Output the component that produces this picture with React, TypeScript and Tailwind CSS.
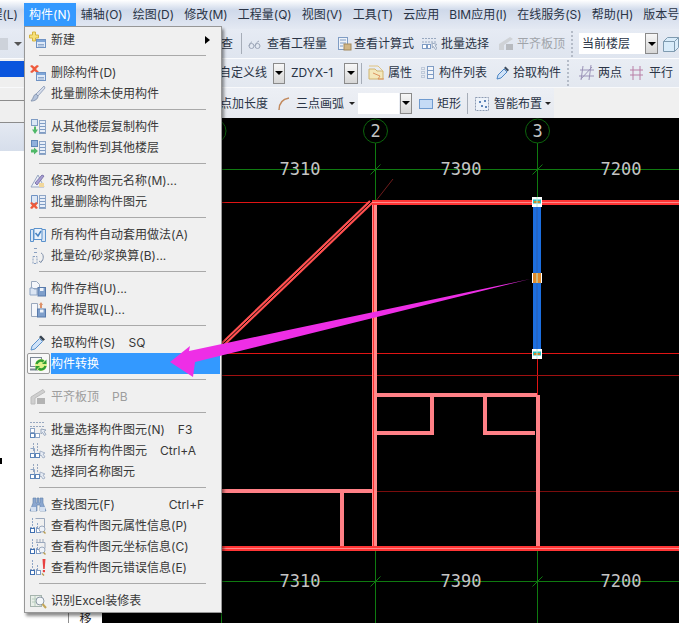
import React from "react";

const CJK = { fontFamily: 'Inter, "Noto Sans CJK SC", "Liberation Sans", sans-serif' };

function Svg({ w = 18, children }: { w?: number; children: React.ReactNode }) {
  return (
    <svg width={w} height={18} viewBox={`0 0 ${w} 18`} className="block shrink-0">
      {children}
    </svg>
  );
}

const MiniTable = ({ x = 7, y = 8 }: { x?: number; y?: number }) => (
  <g>
    <rect x={x + 0.5} y={y + 0.5} width="9" height="8" fill="#dfe9f7" stroke="#6f93c4" />
    <rect x={x + 1} y={y + 1} width="8" height="2" fill="#7fa6d8" />
    <path d={`M${x + 2} ${y + 5.5}h6M${x + 2} ${y + 7}h6`} stroke="#8fa9cc" />
  </g>
);
const Lists = ({ x = 9 }: { x?: number }) => (
  <g>
    <rect x={x + 0.5} y="2.500" width="6" height="13" fill="#e7eef8" stroke="#8fa6c6" />
    <path d={`M${x + 1} 5.500h5M${x + 1} 8.500h5M${x + 1} 11.500h5M${x + 1} 14.500h5`} stroke="#7f9cc4" />
  </g>
);
const Dashed = () => (
  <g fill="none" stroke="#8fa6c6">
    <path d="M3.500 1v9M1 10.500h9M8.500 6v4" strokeDasharray="2 1" />
    <rect x="1.500" y="11.500" width="4" height="4" stroke="#3f6fb0" fill="#fff" />
    <rect x="7.500" y="11.500" width="4" height="4" stroke="#7f9cc4" fill="#fff" />
  </g>
);

const icons: Record<string, React.ReactNode> = {
  new: (
    <>
      <path d="M3.500 1h3v3h3v3h-3v3h-3V7h-3V4h3z" fill="#f6e07a" stroke="#d4b440" />
      <MiniTable />
    </>
  ),
  del: (
    <>
      <path d="M1 2l2-1 2.500 2L8 1l2 1-3 3 3 3-2 1-2.500-2L3 9 1 8l3-3z" fill="#ee5a3c" />
      <MiniTable />
    </>
  ),
  brush: (
    <>
      <path d="M15 1L7 9l2 2 7-8z" fill="#d5dcea" stroke="#9aa8c0" />
      <path d="M7 9c-3 1-2 4-5 7 4 0 7-2 7-5z" fill="#b5c4dc" stroke="#8b9ab3" />
    </>
  ),
  copyFrom: (
    <>
      <Lists x={10} />
      <rect x="2.500" y="1.500" width="6" height="6" fill="#dbe7f5" stroke="#7f9cc4" />
      <path d="M5 8.500v3H3l3 4.500 3-4.500H7v-3z" fill="#4fb868" />
    </>
  ),
  copyTo: (
    <>
      <Lists x={10} />
      <rect x="2.500" y="1.500" width="6" height="6" fill="#8fb0dc" stroke="#5f86b8" />
      <path d="M2 10.500h3v-2l4 3.500-4 3.500v-2H2z" fill="#4fb868" />
    </>
  ),
  rename: (
    <>
      <path d="M2 15L9 3l6 12z" fill="#eef2f8" stroke="#98a6c2" />
      <path d="M6 11l7-8 2 1-7 9z" fill="#a89fd4" stroke="#7f78ac" />
      <rect x="10" y="11" width="5" height="4" fill="#f1d79a" />
    </>
  ),
  batchDel: (
    <>
      <Lists x={10} />
      <path d="M2.500 2.500h6v8h-6z" fill="#dce7f5" stroke="#6f93c4" />
      <path d="M1 10l2-1 2 2 2-2 2 1-2 2.500 2 2.500-2 1-2-2-2 2-2-1 2-2.500z" fill="#ee5a3c" />
    </>
  ),
  auto: (
    <>
      <path d="M1.500 3.500h3v12h-3zM12.500 3.500h4v12h-4z" fill="#dbe7f6" stroke="#5b92cc" />
      <path d="M5 2.500h8v11H5z" fill="#eaf2fb" stroke="#5b92cc" />
      <path d="M6.500 7l2.500 3 3-5" fill="none" stroke="#4a84c2" strokeWidth="1.500" />
    </>
  ),
  ab: (
    <>
      <path d="M5 1.500h3M5 5.500h3" stroke="#8aa0c0" />
      <path d="M4 9.500h4v7H4z" fill="none" stroke="#8aa0c0" strokeDasharray="2 1" />
      <path d="M12 6c3 1 3 7 0 9M10 14l2 1.500 1-2" fill="none" stroke="#7f90aa" />
    </>
  ),
  save: (
    <>
      <path d="M2.500 1.500h5l3 3v4h-8z" fill="#f4f6fa" stroke="#9aa8bd" />
      <path d="M1 8h3l1 1h3v6H1z" fill="#dbe5f3" stroke="#8fa6c6" />
      <rect x="9" y="7.500" width="7.500" height="8.500" fill="#7f9fcb" stroke="#587aab" />
      <rect x="11" y="8" width="3.500" height="3" fill="#eef3fa" />
    </>
  ),
  extract: (
    <>
      <path d="M2.500 2.500h6v13h-6z" fill="#f4f6fa" stroke="#9aa8bd" />
      <path d="M12 1l2 3h-1v3h-2V4h-1z" fill="#dd9168" />
      <rect x="8.500" y="8" width="8" height="8" fill="#7f9fcb" stroke="#587aab" />
      <rect x="11" y="8.500" width="3.500" height="3" fill="#eef3fa" />
    </>
  ),
  dropper: (
    <>
      <path d="M12 1.500l4 4-2 1.500-4-4z" fill="#36424f" />
      <path d="M10.500 4.500L3 12l-1 4 4-1 7.500-7.500z" fill="#cfe2f8" stroke="#5b92cc" />
    </>
  ),
  convert: (
    <>
      <rect x="0.500" y="2.500" width="11" height="9" fill="#f7f8f9" stroke="#7d8896" />
      <path d="M0 14.500h8" stroke="#7d8896" strokeWidth="2" />
      <circle cx="11" cy="10" r="6" fill="#dff28a" />
      <path d="M6.500 9c.8-3 4.500-4.500 7-2.500" fill="none" stroke="#2f9e34" strokeWidth="2.400" />
      <path d="M15.500 11c-.8 3-4.500 4.500-7 2.500" fill="none" stroke="#2f9e34" strokeWidth="2.400" />
      <path d="M12 9h4.500V4.500zM10 11H5.500v4.500z" fill="#2f9e34" />
    </>
  ),
  flat: (
    <>
      <path d="M2 9L14 1.500 16 4 6 10v6H2z" fill="#cfcfcf" stroke="#bcbcbc" />
      <rect x="8" y="10" width="8" height="6" fill="#b3b3b3" />
    </>
  ),
  selBatch: (
    <>
      <path d="M1 1.500h14M1 5.500h14" stroke="#98a8c0" strokeDasharray="2 1" />
      <path d="M12 8l5 1-2 1.500 2 3-1.500 1-2-3-1.500 1.500z" fill="#e8edf5" stroke="#9aa8bd" />
      <rect x="1.500" y="7.500" width="4" height="4" fill="#fff" stroke="#8fa6c6" />
      <rect x="1.500" y="12.500" width="4" height="4" fill="#fff" stroke="#5f86b8" />
      <rect x="6.500" y="12.500" width="4" height="4" fill="#fff" stroke="#8fa6c6" />
    </>
  ),
  selAll: (
    <>
      <path d="M4.500 1v9M8.500 1v9" stroke="#98a8c0" strokeDasharray="2 1" />
      <path d="M11 9l5 2-2 1 2 3-2 1-2-3-1 1z" fill="#e8edf5" stroke="#a9b5c8" />
      <rect x="1.500" y="11.500" width="4" height="4" fill="#fff" stroke="#5f86b8" />
      <rect x="6.500" y="11.500" width="4" height="4" fill="#fff" stroke="#5f86b8" />
      <path d="M1.500 6.500h4v5" fill="none" stroke="#8fa6c6" />
    </>
  ),
  binoc: (
    <>
      <path d="M4 2h3v5h1V2h0h2v5h1V2h3v5l3 8h-6V9H8v6H1l3-8z" fill="#8aa6cf" stroke="#5f7faa" strokeWidth=".6" />
      <rect x="2" y="11" width="5" height="4" fill="#d3dff0" />
      <rect x="11" y="11" width="5" height="4" fill="#d3dff0" />
    </>
  ),
  infoP: (
    <>
      <Dashed />
      <path d="M6.500 1.500h9v9h-3" fill="none" stroke="#9aa8bd" />
      <circle cx="13" cy="12" r="3" fill="#eef2f8" stroke="#9aa8bd" />
      <path d="M14.500 14.500l2 2" stroke="#b89c50" strokeWidth="1.500" />
    </>
  ),
  infoC: (
    <>
      <Dashed />
      <path d="M8 1v3M11 1v3M14 1v3M7 4.500h9v6" fill="none" stroke="#9aa8bd" />
      <circle cx="13" cy="12" r="3" fill="#eef2f8" stroke="#9aa8bd" />
      <path d="M14.500 14.500l2 2" stroke="#b89c50" strokeWidth="1.500" />
    </>
  ),
  infoE: (
    <>
      <Dashed />
      <path d="M13.500 0h3l-.8 10h-1.500z" fill="#e84040" />
      <rect x="13.800" y="11" width="2.200" height="2.200" fill="#e84040" />
      <path d="M13 14.500l2 2" stroke="#b89c50" strokeWidth="1.500" />
    </>
  ),
  excel: (
    <>
      <rect x="1.500" y="3.500" width="11" height="11" fill="#e9efe9" stroke="#a6b4ae" />
      <path d="M3 7h8M3 10h8M6 4v10" stroke="#b7cdbd" />
      <circle cx="11" cy="9" r="4" fill="#f3f6f8" stroke="#8d99a6" />
      <path d="M13.500 12l3.500 4" stroke="#c4a758" strokeWidth="2" />
    </>
  ),
};

type Entry =
  | { sep: true }
  | { icon?: string; label: string; sc?: string; scCls?: string; arrow?: boolean; disabled?: boolean; active?: boolean };

const menu: Entry[] = [
  { icon: "new", label: "新建", arrow: true },
  { sep: true },
  { icon: "del", label: "删除构件(D)" },
  { icon: "brush", label: "批量删除未使用构件" },
  { sep: true },
  { icon: "copyFrom", label: "从其他楼层复制构件" },
  { icon: "copyTo", label: "复制构件到其他楼层" },
  { sep: true },
  { icon: "rename", label: "修改构件图元名称(M)..." },
  { icon: "batchDel", label: "批量删除构件图元" },
  { sep: true },
  { icon: "auto", label: "所有构件自动套用做法(A)" },
  { icon: "ab", label: "批量砼/砂浆换算(B)..." },
  { sep: true },
  { icon: "save", label: "构件存档(U)..." },
  { icon: "extract", label: "构件提取(L)..." },
  { sep: true },
  { icon: "dropper", label: "拾取构件(S)", sc: "SQ", scCls: "ml-[13px]" },
  { icon: "convert", label: "构件转换", active: true },
  { sep: true },
  { icon: "flat", label: "平齐板顶", sc: "PB", scCls: "ml-[13px]", disabled: true },
  { sep: true },
  { icon: "selBatch", label: "批量选择构件图元(N)", sc: "F3", scCls: "ml-[13px]" },
  { icon: "selAll", label: "选择所有构件图元", sc: "Ctrl+A", scCls: "ml-[13px]" },
  { icon: "selAll", label: "选择同名称图元" },
  { sep: true },
  { icon: "binoc", label: "查找图元(F)", sc: "Ctrl+F", scCls: "ml-[54px]" },
  { icon: "infoP", label: "查看构件图元属性信息(P)" },
  { icon: "infoC", label: "查看构件图元坐标信息(C)" },
  { icon: "infoE", label: "查看构件图元错误信息(E)" },
  { sep: true },
  { icon: "excel", label: "识别Excel装修表" },
];

function Menu() {
  return (
    <div className="absolute left-[24px] top-[26px] z-10 w-[198px] h-[587px] border border-[#979797] bg-[#f0f0f0] pt-[2px] pr-[1px] shadow-[2px_3px_3px_rgba(0,0,0,0.45)] text-[12px] text-[#383838]">
      {menu.map((m, i) => {
        if ("sep" in m) {
          return (
            <div key={i} className="h-[12px] pt-[5px] pl-[14px] pr-[14px]">
              <div className="h-px w-full bg-[#a9a9a9]" />
            </div>
          );
        }
        return (
          <div key={i} className="h-[21px] flex items-center relative">
            <div
              className={
                m.active
                  ? "w-[23px] h-[21px] ml-[2px] mr-px flex items-center justify-center border border-[#9a9a9a] rounded-[2px] bg-[#f8f8f8]"
                  : "w-[26px] flex items-center pl-[4px]"
              }
            >
              {m.icon ? <Svg>{icons[m.icon]}</Svg> : null}
            </div>
            <div
              className={
                m.active
                  ? "flex-1 h-[21px] flex items-center bg-[#3399ff] text-white"
                  : m.disabled
                    ? "flex-1 flex items-center text-[#9d9d9d]"
                    : "flex-1 flex items-center"
              }
            >
              <span className="whitespace-nowrap">{m.label}</span>
              {m.sc ? <span className={m.scCls + " whitespace-nowrap"}>{m.sc}</span> : null}
              {m.arrow ? (
                <span className="ml-auto mr-[10px] w-0 h-0 border-y-[4px] border-y-transparent border-l-[5px] border-l-black" />
              ) : null}
            </div>
          </div>
        );
      })}
    </div>
  );
}

const bar = [
  ["构件(N)", true],
  ["辅轴(O)"],
  ["绘图(D)"],
  ["修改(M)"],
  ["工程量(Q)"],
  ["视图(V)"],
  ["工具(T)"],
  ["云应用"],
  ["BIM应用(I)"],
  ["在线服务(S)"],
  ["帮助(H)"],
  ["版本号(B)"],
] as [string, boolean?][];

function MenuBar() {
  return (
    <div className="h-[29px] flex items-start overflow-hidden bg-gradient-to-b from-[#ffffff] via-[#cfd9ea] via-[35%] to-[#e4e9f3] text-[12px] text-[#2a3446] whitespace-nowrap">
      <div className="w-[24px] h-[23px] mt-[3px] overflow-hidden flex justify-end items-center pr-[6px] shrink-0">
        <span className="shrink-0">程(L)</span>
      </div>
      {bar.map(([t, on]) => (
        <div
          key={t}
          className={
            on
              ? "h-[23px] mt-[3px] px-[5px] flex items-center bg-[#3399ff] text-white shrink-0"
              : "h-[23px] mt-[3px] px-[5px] flex items-center shrink-0"
          }
        >
          {t}
        </div>
      ))}
    </div>
  );
}

const Sep = ({ className = "" }: { className?: string }) => (
  <div className={"w-px h-[21px] bg-[#a6adb8] shrink-0 " + className} />
);
const Grip = ({ className = "" }: { className?: string }) => (
  <div className={"w-[2px] h-[26px] shrink-0 border-l-2 border-dotted border-[#b5bcc8] " + className} />
);
const Drop = ({ className = "" }: { className?: string }) => (
  <div className={"h-[21px] shrink-0 flex items-center justify-center border border-[#8a8a8a] bg-gradient-to-b from-[#f7f7f7] to-[#d6d6d6] " + className}>
    <span className="w-0 h-0 border-x-[4px] border-x-transparent border-t-[4px] border-t-black" />
  </div>
);
const Caret = ({ className = "" }: { className?: string }) => (
  <span className={"w-0 h-0 shrink-0 border-x-[3px] border-x-transparent border-t-[3px] border-t-[#222] " + className} />
);

function Tool({ className, icon, w = 16, children, gray }: { className: string; icon: React.ReactNode; w?: number; children: string; gray?: boolean }) {
  return (
    <div className={"flex items-center shrink-0 " + className + (gray ? " text-[#a0a4aa]" : "")}>
      <Svg w={w}>{icon}</Svg>
      <span className="whitespace-nowrap">{children}</span>
    </div>
  );
}

const T = {
  glasses: (
    <path d="M1 11c1-3 2-4 3-4M7 11c1-3 2-4 4-5M1 11a2.500 2.500 0 105 0 2.500 2.500 0 10-5 0M7 11a2.500 2.500 0 105 0 2.500 2.500 0 10-5 0" fill="none" stroke="#9aa4b6" />
  ),
  calc: (
    <>
      <rect x="1.500" y="2.500" width="9" height="12" fill="#eef2f8" stroke="#7f9cc4" />
      <path d="M3 5h6M3 8h6M3 11h3" stroke="#7f9cc4" />
      <rect x="7" y="9" width="7" height="6" fill="#d0b584" stroke="#a48a5e" />
    </>
  ),
  batch: (
    <>
      <path d="M1 3.500h15M1 7h15" stroke="#98a8c0" strokeDasharray="2 1" />
      <path d="M11 8l5 1.500-2 1 2 3-1.500 1-2-3-1 1.500z" fill="#f0f3f8" stroke="#98a8c0" />
      <rect x="1.500" y="9.500" width="4" height="4" fill="#fff" stroke="#7f9cc4" />
      <rect x="6.500" y="9.500" width="3" height="4" fill="#fff" stroke="#7f9cc4" />
    </>
  ),
  flat: (
    <>
      <path d="M1 9L12 2l3 2-9 6v5H1z" fill="#cfd2d6" />
      <rect x="8" y="9" width="7" height="6" fill="#b7babf" />
    </>
  ),
  cube: (
    <>
      <path d="M1.500 6.500l4-4h11v10l-4 4h-11z" fill="#d9ecfa" stroke="#7f9bb0" />
      <path d="M1.500 6.500h11v10M12.500 6.500l4-4" fill="none" stroke="#7f9bb0" />
    </>
  ),
  prop: (
    <>
      <path d="M1 5h6l2 2h6v8H1z" fill="#f4e8bc" stroke="#d0b470" />
      <path d="M1 2h9l5 5" fill="none" stroke="#e0c380" />
      <path d="M5 9l7 3-2 3h6" fill="none" stroke="#dd9460" />
    </>
  ),
  list: (
    <>
      <path d="M1.500 3.500h3v2h-3zM1.500 7.500h3v2h-3zM1.500 11.500h3v2h-3z" fill="none" stroke="#98a8c0" strokeDasharray="1 1" />
      <rect x="7.500" y="2.500" width="6" height="12" fill="#f2f5fa" stroke="#7f9cc4" />
      <path d="M7.500 6.500h6M7.500 10.500h6" stroke="#7f9cc4" />
    </>
  ),
  dropper: (
    <>
      <path d="M10.500 2.500l3.500 3.500-1.500 1.500-3.500-3.500z" fill="#3d4c5f" />
      <path d="M9 5L3 11l-1 4 4-1 6-6z" fill="#cfe2f8" stroke="#4d86c4" />
    </>
  ),
  two: <path d="M4 2l-2 14M12 1l-2 15M1 6h14M0 12h15M2 15L13 3" fill="none" stroke="#9b93b8" />,
  par: <path d="M4 2v14M11 2v14M1 6h13M1 11h13" fill="none" stroke="#b97fa6" />,
  arc: (
    <path d="M2 15C2 8 6 4 12 3" fill="none" stroke="#c28a5e" strokeWidth="1.500" />
  ),
  rect: <rect x="1.500" y="4.500" width="13" height="9" fill="#c5dbf6" stroke="#6f9bd0" />,
  smart: (
    <>
      <rect x="1.500" y="2.500" width="13" height="13" fill="#eef3fa" stroke="#8c9bb3" strokeDasharray="2 1" />
      <path d="M5 6h2v2H5zM10 5h2v2h-2zM7 10h2v2H7zM11 11h2v2h-2z" fill="#5f86b8" />
    </>
  ),
};

function Toolbars() {
  return (
    <div className="text-[12px] text-[#2a3446]">
      <div className="h-[30px] flex items-center overflow-hidden border-b border-[#fbfcfe] bg-gradient-to-b from-[#e6ebf4] to-[#dfe5ef]">
        <div className="w-[221px] shrink-0 flex items-center">
          <div className="w-[8px] h-[12px] bg-[#cdd2da]" />
          <Caret className="ml-[6px] border-x-[4px] border-t-[4px] border-t-[#555]" />
        </div>
        <span className="shrink-0">查</span>
        <Sep className="ml-[8px]" />
        <Tool className="ml-[6px] gap-[4px]" icon={T.glasses} w={15}>查看工程量</Tool>
        <Tool className="ml-[10px] gap-[2px]" icon={T.calc} w={15}>查看计算式</Tool>
        <Tool className="ml-[7px] gap-[4px]" icon={T.batch} w={16}>批量选择</Tool>
        <Tool className="ml-[9px] gap-[4px]" icon={T.flat} w={15} gray>平齐板顶</Tool>
        <Grip className="ml-[6px]" />
        <div className="ml-[6px] w-[66px] h-[21px] shrink-0 bg-white pl-[3px] flex items-center">当前楼层</div>
        <Drop className="w-[13px]" />
        <div className="ml-[4px] shrink-0"><Svg w={18}>{T.cube}</Svg></div>
      </div>
      <div className="h-[29px] flex items-center overflow-hidden border-b border-[#f8f9fb] bg-gradient-to-b from-[#e9edf4] to-[#e3e8f0]">
        <div className="w-[219px] h-full shrink-0 bg-[#efefef] pt-[2px]">
          <div className="h-[16px] bg-[#0a55dd]" />
        </div>
        <span className="shrink-0">自定义线</span>
        <Drop className="w-[12px] ml-[6px]" />
        <div className="ml-[6px] w-[53px] h-[21px] shrink-0 flex items-center">ZDYX-1</div>
        <Drop className="w-[14px]" />
        <Sep className="ml-[3px]" />
        <Tool className="ml-[6px] gap-[2px]" icon={T.prop} w={18}>属性</Tool>
        <Tool className="ml-[8px] gap-[5px]" icon={T.list} w={14}>构件列表</Tool>
        <Tool className="ml-[8px] gap-[3px]" icon={T.dropper} w={15}>拾取构件</Tool>
        <Grip className="ml-[6px]" />
        <Tool className="ml-[10px] gap-[4px]" icon={T.two} w={15}>两点</Tool>
        <Tool className="ml-[7px] gap-[5px]" icon={T.par} w={15}>平行</Tool>
      </div>
      <div className="h-[30px] flex items-center bg-[#f0f0f0] overflow-hidden">
        <div className="w-[554px] h-full shrink-0 flex items-center bg-gradient-to-b from-[#eceff5] to-[#e6e9ef]">
          <div className="w-[220px] self-stretch shrink-0 bg-[#efefef] pt-[12px]">
            <div className="h-px bg-[#8c8c8c]" />
          </div>
          <span className="shrink-0 pt-[2px]">点加长度</span>
          <Tool className="ml-[9px] gap-[5px] pt-[2px]" icon={T.arc} w={14}>三点画弧</Tool>
          <Caret className="ml-[5px]" />
          <div className="ml-[3px] w-[41px] h-[21px] shrink-0 bg-white" />
          <Drop className="w-[12px] ml-px" />
          <Tool className="ml-[6px] gap-[3px] pt-[2px]" icon={T.rect} w={16}>矩形</Tool>
          <Sep className="ml-[6px]" />
          <Tool className="ml-[6px] gap-[4px] pt-[2px]" icon={T.smart} w={16}>智能布置</Tool>
          <Caret className="ml-[3px]" />
        </div>
      </div>
    </div>
  );
}

const DIM = { fontFamily: '"DejaVu Sans Mono", monospace', fontSize: 17 };

function Plan() {
  const green = "#0f7a10";
  const Bubble = ({ x, n }: { x: number; n?: string }) => (
    <g>
      <circle cx={x} cy={131} r={12} fill="none" stroke="#0c640c" strokeWidth="1" />
      {n ? (
        <text x={x} y={137} textAnchor="middle" fill="#c4c4c4" style={DIM}>
          {n}
        </text>
      ) : null}
    </g>
  );
  const Tick = ({ x, y }: { x: number; y: number }) => (
    <path d={`M${x - 5} ${y + 5}L${x + 5} ${y - 5}`} stroke={green} />
  );
  const Dim = ({ x, y, t }: { x: number; y: number; t: string }) => (
    <text x={x} y={y} textAnchor="middle" fill="#c4c4c4" style={DIM}>
      {t}
    </text>
  );
  const Handle = ({ y, mid }: { y: number; mid?: boolean }) => (
    <g>
      <rect x="532" y={y} width="10" height="10" fill="#fff" />
      {mid ? (
        <rect x="533" y={y} width="8" height="10" fill="#e08a28" />
      ) : (
        <>
          <rect x="533" y={y + 2.500} width="8" height="4" fill="#20c0c0" />
          <rect x="534" y={y + 4} width="6" height="2" fill="#c88a30" />
        </>
      )}
      <path d={`M537 ${y}v10`} stroke="#b8e8d8" />
    </g>
  );
  return (
    <svg viewBox="102 118 577 505" className="block w-[577px] h-[505px] bg-black shrink-0">
      <g stroke={green} strokeWidth="1" shapeRendering="crispEdges" fill="none">
        <path d="M222 169.500H679M222 581.500H679" />
        <path d="M375.500 143V202M537.500 143V200M375.500 548V623M537.500 548V623M221.500 548V623" />
      </g>
      <Bubble x={214} />
      <Bubble x={375.5} n="2" />
      <Bubble x={537.5} n="3" />
      <Tick x={375.5} y={169.5} />
      <Tick x={537.5} y={169.5} />
      <Tick x={375.5} y={581.5} />
      <Tick x={537.5} y={581.5} />
      <Dim x={300} y={175} t="7310" />
      <Dim x={461} y={175} t="7390" />
      <Dim x={621} y={175} t="7200" />
      <Dim x={300} y={587} t="7310" />
      <Dim x={461} y={587} t="7390" />
      <Dim x={621} y={587} t="7200" />

      <path d="M375 202L393 179" stroke="#6e1c1c" />
      <g shapeRendering="crispEdges" fill="none">
        <path d="M222 202.500H372M222 353.500H679M537.500 355V395" stroke="#e01414" />
        <path d="M222 375.500H679" stroke="#a01010" />
        <path d="M377 491.500H679" stroke="#7a0c0c" />
      </g>
      <path d="M222 345L371 202" stroke="#ff5050" strokeWidth="5" fill="none" />
      <path d="M222 345L371 202" stroke="#000" strokeWidth="1" fill="none" />

      <g shapeRendering="crispEdges" fill="none">
        <path d="M374.500 200V548" stroke="#ff8a8a" strokeWidth="5" />
        <path d="M373.500 200V548" stroke="#ff3030" strokeWidth="1" />
        <path d="M372 202.500H679" stroke="#ff3535" strokeWidth="5" />
        <path d="M372 202.500H679" stroke="#ff8a8a" strokeWidth="1" />

        <path d="M377 395H537M377 433H433M484 433H535" stroke="#ff8086" strokeWidth="4" />
        <path d="M431.500 395V435M484.500 395V435" stroke="#ff8086" strokeWidth="4" />
        <path d="M537.500 395V546" stroke="#ff8086" strokeWidth="4" />
        <path d="M222 491H372" stroke="#ff8086" strokeWidth="4" />
        <path d="M342 491V546" stroke="#ff8086" strokeWidth="4" />
        <path d="M222 548.500H679" stroke="#ff3535" strokeWidth="5" />
        <path d="M222 548.500H679" stroke="#ff8a8a" strokeWidth="1" />
      </g>

      <rect x="533" y="202" width="8" height="152" fill="#1d6fe0" />
      <path d="M537 204V352" stroke="#2a5fb0" />
      <Handle y={197} />
      <Handle y={273} mid />
      <Handle y={349} />
    </svg>
  );
}

export default function App() {
  return (
    <div className="relative w-[679px] h-[623px] overflow-hidden bg-white flex flex-col" style={CJK}>
      <MenuBar />
      <Toolbars />
      <div className="flex-1 flex min-h-0">
        <div className="w-[69px] shrink-0 border-r border-[#8e8e8e] bg-white flex flex-col">
          <div className="h-[4px] bg-[#efefef] border-b-0" />
          <div className="h-[29px] border-t border-[#8c8c8c] bg-gradient-to-b from-[#e4e9f2] to-[#d6deeb]" />
          <div className="mt-[307px] w-[2px] h-[6px] bg-black" />
        </div>
        <div className="w-[33px] shrink-0 bg-white flex flex-col justify-end items-center text-[12px] leading-none text-[#222]">
          <span className="-mb-[2px]">移</span>
        </div>
        <div className="flex-1 bg-black min-w-0 overflow-hidden">
          <Plan />
        </div>
      </div>
      <Menu />
      <svg className="absolute left-0 top-0 z-20 pointer-events-none" width="679" height="623" viewBox="0 0 679 623">
        <path d="M170 362L190 346L189 351L530 279L195 362L193 377Z" fill="#ee2ee6" />
      </svg>
    </div>
  );
}
